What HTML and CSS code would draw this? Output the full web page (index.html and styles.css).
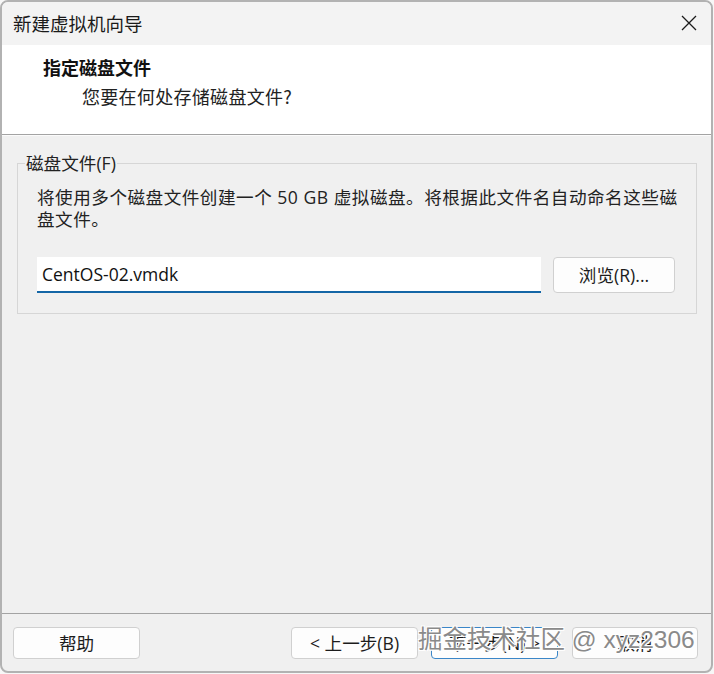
FILE: index.html
```html
<!DOCTYPE html>
<html lang="zh-CN">
<head>
<meta charset="utf-8">
<title>新建虚拟机向导</title>
<link rel="stylesheet" href="styles.css">
</head>
<body>
<div class="window">
  <div class="titlebar">
    <span class="title">新建虚拟机向导</span>
    <button class="close" aria-label="关闭">
      <svg width="16" height="16" viewBox="0 0 16 16"><path d="M1 1 L15 15 M15 1 L1 15" stroke="#1b1b1b" stroke-width="1.3" fill="none"/></svg>
    </button>
  </div>

  <div class="header">
    <h1 class="heading">指定磁盘文件</h1>
    <p class="subheading">您要在何处存储磁盘文件?</p>
  </div>

  <div class="content">
    <fieldset class="group">
      <legend class="group-label">磁盘文件(F)</legend>
      <p class="desc">将使用多个磁盘文件创建一个 50 GB 虚拟磁盘。将根据此文件名自动命名这些磁盘文件。</p>
      <div class="file-row">
        <div class="input">CentOS-02.vmdk</div>
        <button class="btn browse">浏览(R)...</button>
      </div>
    </fieldset>
  </div>

  <div class="footer">
    <button class="btn">帮助</button>
    <div class="nav">
      <button class="btn">&lt; 上一步(B)</button>
      <button class="btn primary">下一步(N) &gt;</button>
      <button class="btn cancel">取消</button>
    </div>
  </div>

  <div class="watermark">掘金技术社区 @ xyz2306</div>
</div>
</body>
</html>
```

FILE: styles.css
```css
* {
  box-sizing: border-box;
}

html, body {
  margin: 0;
  padding: 0;
  background: #f7f7f7;
}

body {
  font-family: "Open Sans", "Noto Sans CJK SC", sans-serif;
  color: #1c1c1c;
}

.window {
  position: relative;
  width: 713px;
  height: 673px;
  border: 2px solid #b2b2b2;
  border-radius: 8px;
  background: #f0f0f0;
  display: flex;
  flex-direction: column;
  overflow: hidden;
}

/* title bar */
.titlebar {
  height: 43px;
  flex: none;
  background: #f3f3f3;
  display: flex;
  align-items: center;
  justify-content: space-between;
  padding: 0 0 2px 11px;
}

.title {
  font-family: "Noto Sans CJK SC", sans-serif;
  font-size: 18.5px;
  line-height: 24px;
  color: #1a1a1a;
}

.close {
  width: 46px;
  height: 40px;
  border: none;
  background: transparent;
  display: flex;
  align-items: center;
  justify-content: center;
  padding: 0 0 0 2px;
}

.close svg {
  display: block;
}

/* wizard page header */
.header {
  height: 90px;
  flex: none;
  background: #fff;
  border-bottom: 1px solid #a3a3a3;
  padding: 10px 0 0 41px;
}

.heading {
  margin: 0;
  font-family: "Noto Sans CJK SC", sans-serif;
  font-size: 18px;
  font-weight: 700;
  line-height: 24px;
  color: #111;
}

.subheading {
  margin: 5px 0 0 39px;
  font-family: "Noto Sans CJK SC", sans-serif;
  font-size: 18px;
  font-weight: 400;
  line-height: 24px;
  letter-spacing: 0.3px;
  color: #222;
}

/* main area */
.content {
  flex: 1;
  padding: 16px 14px 0 15px;
  border-top: 1px solid #fbfbfb;
}

.group {
  margin: 0;
  min-width: 0;
  border: 1px solid #d6d6d6;
  padding: 0 14px 20px 19px;
}

.group-label {
  margin-left: -12px;
  padding: 0 1px;
  font-size: 17.6px;
  line-height: 22px;
  color: #222;
}

.desc {
  max-width: 646px;
  margin: 12px 0 0;
  font-size: 17.6px;
  line-height: 22px;
  letter-spacing: 0.5px;
  color: #222;
}

.file-row {
  display: flex;
  gap: 12px;
  margin-top: 27px;
}

.input {
  width: 504px;
  height: 36px;
  background: #fff;
  border-bottom: 2px solid #1466a6;
  padding: 0 0 0 5px;
  font-size: 17.5px;
  line-height: 34px;
  color: #111;
}

.btn {
  width: 127px;
  height: 32px;
  border: 1px solid #d0d0d0;
  border-radius: 4px;
  background: #fdfdfd;
  font-family: "Open Sans", "Noto Sans CJK SC", sans-serif;
  font-size: 17.6px;
  line-height: 20px;
  color: #1c1c1c;
  padding: 0;
}

.browse {
  width: 122px;
  height: 36px;
}

/* bottom button strip */
.footer {
  flex: none;
  border-top: 1px solid #a3a3a3;
  padding: 13px 13px 12px 11px;
  display: flex;
  justify-content: space-between;
}

.nav {
  display: flex;
  gap: 13px;
}

.primary {
  border: 1.5px solid #3a86c8;
}

.cancel {
  margin-left: 1px;
  width: 126px;
}

/* site watermark over the buttons */
.watermark {
  position: absolute;
  left: 416px;
  top: 622px;
  font-family: "Liberation Sans", "Noto Sans CJK SC", sans-serif;
  font-size: 24.5px;
  line-height: 32px;
  color: #8a8a8a;
  white-space: nowrap;
  text-shadow: 1px 1px 0 #fff, -1px -1px 0 #fff, 1px -1px 0 #fff, -1px 1px 0 #fff;
  pointer-events: none;
}
```
